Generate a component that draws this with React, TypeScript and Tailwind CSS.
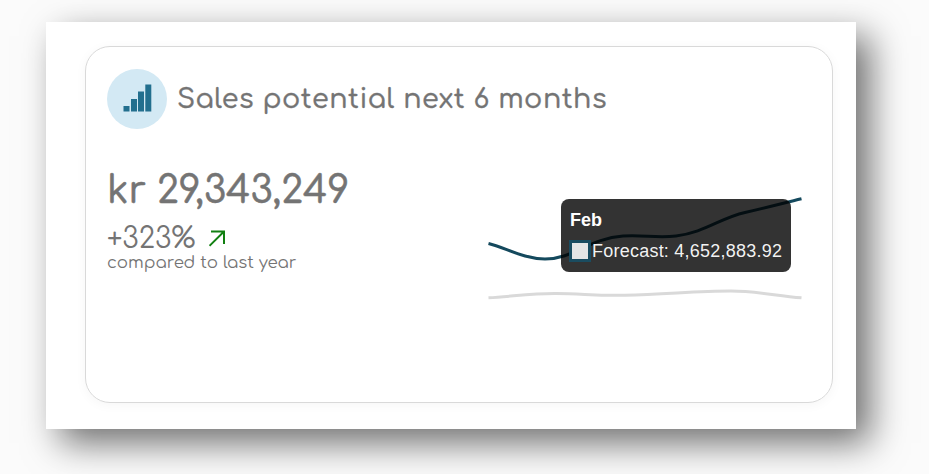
const FORECAST_PATH =
  'M488.5 243.5C506 248 524 259 545 259C574 259 589 238.500 623 236C644 234.500 656 238.500 676 236C705 232.500 720 218 745 212.500C767 207.500 784 203 801.500 198.800';
const LAST_YEAR_PATH =
  'M488.5 297.800C512 296.500 532 293.300 556 293.500C583 293.700 595 295.800 625 295.200C666 294.400 696 291 731 291C756 291 776 295.700 801.500 297.800';

function BarsIcon() {
  return (
    <svg className="-mt-[2px] ml-[2px]" width="30" height="28" viewBox="0 0 30 28" fill="#226f8e" aria-hidden="true">
      <path d="M0.500 22H6.500V27.500H0.500zM8 15H14V27.500H8zM15 7.500H21V27.500H15zM22.300 0.500H28.300V27.500H22.300z" />
    </svg>
  );
}

function TrendArrow() {
  return (
    <svg className="-mt-px ml-[14px]" width="17" height="17" viewBox="0 0 17 17" fill="none" stroke="#118011" strokeWidth="2" aria-hidden="true">
      <path d="M0.500 15.800L15 1.500M2 1.500H15V14" />
    </svg>
  );
}

function ForecastChart() {
  return (
    <div className="relative mt-[14px] h-[126px] w-[313px] shrink-0">
      <svg className="block h-full w-full overflow-visible" viewBox="488 185 313 126" fill="none" strokeWidth="3">
        <path d={LAST_YEAR_PATH} stroke="#d9d9d9" />
        <path d={FORECAST_PATH} stroke="#14495d" />
      </svg>
      <div className="absolute left-[73px] top-[14px] h-[73px] w-[230px] rounded-[8px] bg-black/80 pl-[9px] pt-[9px] font-['Liberation_Sans',sans-serif] text-[18px] leading-6 text-white">
        <div className="font-bold">Feb</div>
        <div className="mt-[7px] flex items-center">
          <span className="-ml-px mr-px h-[22px] w-[22px] shrink-0 border-[3px] border-[#1a4c60] bg-[#e5e5e5]" />
          <span className="whitespace-nowrap tracking-[0.230px] text-white/95">Forecast: 4,652,883.92</span>
        </div>
      </div>
    </div>
  );
}

export default function App() {
  return (
    <div className="h-[474px] w-[929px] overflow-hidden bg-[#fbfbfb] pl-[46px] pt-[22px] font-[Comfortaa,Quicksand,Lato,sans-serif] text-[#747474]">
      <main className="h-[407px] w-[810px] bg-white pl-[39px] pt-6 shadow-[14px_14px_34px_rgba(0,0,0,0.56)]">
        <section className="h-[357px] w-[748px] rounded-[25px] border border-[#d9d9d9] pl-[21px] pt-[22px] shadow-[0_2px_12px_rgba(0,0,0,0.04)]">
          <header className="flex items-center">
            <div className="flex h-[60px] w-[60px] items-center justify-center rounded-full bg-[#d3e9f4]">
              <BarsIcon />
            </div>
            <h1 className="ml-[10px] whitespace-nowrap text-[27px] font-medium leading-9 tracking-[0.500px] [-webkit-text-stroke:0.300px_#747474]">
              Sales potential next 6 months
            </h1>
          </header>
          <div className="mt-[42px] flex">
            <div className="w-[381px] shrink-0">
              <div className="text-[37.500px] font-medium leading-[40px] [-webkit-text-stroke:0.500px_#747474]">kr 29,343,249</div>
              <div className="mt-[13px] flex items-center text-[28px] leading-[30px]">
                <span>+323%</span>
                <TrendArrow />
              </div>
              <div className="-mt-px text-[16.600px] leading-5">compared to last year</div>
            </div>
            <ForecastChart />
          </div>
        </section>
      </main>
    </div>
  );
}
